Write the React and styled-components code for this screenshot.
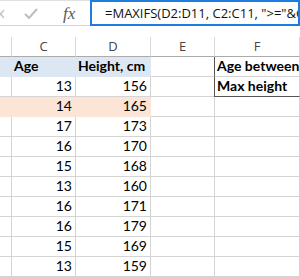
import React from 'react';
import styled, {createGlobalStyle} from 'styled-components';

const GlobalStyle = createGlobalStyle`
    html, body {
        margin: 0;
        padding: 0;
        background: #fff;
    }
    * {
        box-sizing: border-box;
    }
`;

const rows = [
    [13, 156], [14, 165], [17, 173], [16, 170], [15, 168],
    [13, 160], [16, 171], [16, 179], [15, 169], [13, 159],
];

const widths = {b: 12, c: 64, d: 75, e: 64};

const App = () => {
    return (
        <Sheet>
            <GlobalStyle/>
            <FormulaBar>
                <Tools>
                    <svg width="8" height="10" viewBox="0 0 8 10" style={{marginLeft: -3}}>
                        <path d="M0 1 L7 9 M7 1 L0 9" stroke="#c4c4c4" strokeWidth="1.4" fill="none"/>
                    </svg>
                    <svg width="14" height="11" viewBox="0 0 14 11">
                        <path d="M1 6 L5 10 L13 1" stroke="#bdbdbd" strokeWidth="2" fill="none"/>
                    </svg>
                    <Fx>fx</Fx>
                </Tools>
                <FormulaBox>=MAXIFS(D2:D11, C2:C11, "&gt;="&amp;C2, "&lt;="&amp;D2)</FormulaBox>
            </FormulaBar>
            <Spacer/>
            <Row>
                <ColHead w={widths.b}/>
                <ColHead w={widths.c}>C</ColHead>
                <ColHead w={widths.d}>D</ColHead>
                <ColHead w={widths.e}>E</ColHead>
                <ColHead>F</ColHead>
            </Row>
            <Row>
                <Cell w={widths.b} fill="#dde7f4"/>
                <Cell w={widths.c} fill="#dde7f4" bold>Age</Cell>
                <Cell w={widths.d} fill="#dde7f4" bold>Height, cm</Cell>
                <Cell w={widths.e}/>
                <Cell bold boxed>Age between</Cell>
            </Row>
            {rows.map(([age, height], i) => {
                const fill = i === 1 ? '#fce4d6' : undefined;
                return (
                    <Row key={i}>
                        <Cell w={widths.b} fill={fill}/>
                        <Cell w={widths.c} fill={fill} num>{age}</Cell>
                        <Cell w={widths.d} fill={fill} num>{height}</Cell>
                        <Cell w={widths.e}/>
                        {i === 0 ? <Cell bold boxed last>Max height</Cell> : <Cell/>}
                    </Row>
                );
            })}
        </Sheet>
    );
};

const Sheet = styled.div`
    width: 300px;
    height: 277px;
    overflow: hidden;
    font-family: Lato, "Liberation Sans", sans-serif;
`;

const FormulaBar = styled.div`
    display: flex;
    height: 26px;
    border-top: 1px solid #e1e1e1;
    border-bottom: 1px solid #d4d4d4;
`;

const Tools = styled.div`
    width: 90px;
    display: flex;
    align-items: center;
    gap: 19px;
    padding-top: 1px;
    svg {
        flex: none;
    }
`;

const Fx = styled.span`
    font-family: "Liberation Serif", serif;
    font-style: italic;
    font-size: 17px;
    color: #5a5a5a;
    margin-left: 6px;
    letter-spacing: 0;
`;

const FormulaBox = styled.div`
    flex: 1;
    margin-top: -1px;
    margin-bottom: -1px;
    border: 2px solid #1e7be0;
    padding: 0 0 0 13px;
    font-family: "Open Sans", "Noto Sans", sans-serif;
    font-size: 13px;
    line-height: 22px;
    color: #111;
    white-space: nowrap;
    overflow: hidden;
`;

const Spacer = styled.div`
    height: 11px;
`;

const Row = styled.div`
    display: flex;
    height: 20px;
`;

const ColHead = styled.div`
    width: ${p => (p.w ? `${p.w}px` : 'auto')};
    flex: ${p => (p.w ? 'none' : '1')};
    border-right: 1px solid #dadada;
    border-bottom: 1px solid #ababab;
    display: flex;
    align-items: center;
    justify-content: center;
    font-family: "Open Sans", "Noto Sans", sans-serif;
    font-size: 13px;
    color: #444;
    padding-bottom: 1px;
`;

const Cell = styled.div`
    width: ${p => (p.w ? `${p.w}px` : 'auto')};
    flex: ${p => (p.w ? 'none' : '1')};
    background: ${p => p.fill || '#fff'};
    border-right: 1px solid ${p => p.fill || '#d4d4d4'};
    border-bottom: 1px solid ${p => (p.last ? '#555' : p.fill || '#d4d4d4')};
    border-left: ${p => (p.boxed ? '1px solid #555' : 'none')};
    margin-left: ${p => (p.boxed ? '-1px' : '0')};
    display: flex;
    align-items: flex-end;
    justify-content: ${p => (p.num ? 'flex-end' : 'flex-start')};
    padding: 0 3px 1px 2px;
    font-size: 14px;
    line-height: 18px;
    font-weight: ${p => (p.bold ? 700 : 400)};
    color: #000;
    white-space: nowrap;
    overflow: hidden;
`;

export default App;
